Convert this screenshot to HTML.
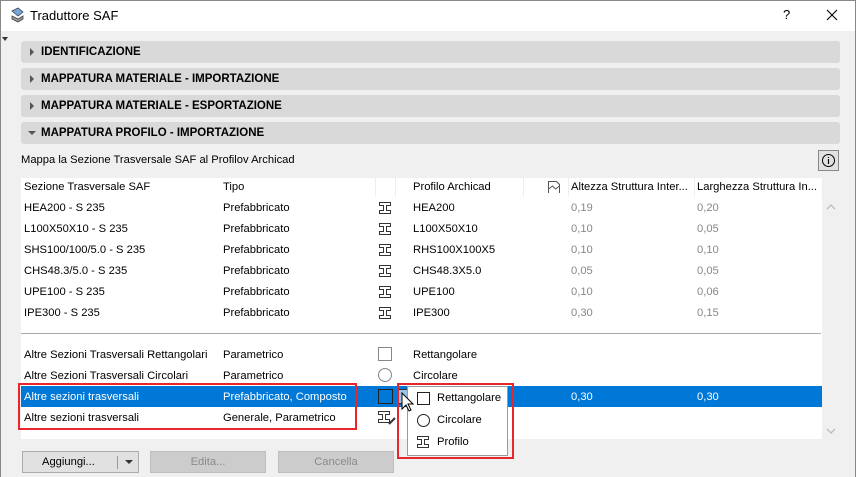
<!DOCTYPE html>
<html><head><meta charset="utf-8"><style>
*{margin:0;padding:0;box-sizing:border-box}
body{width:856px;height:477px;overflow:hidden;background:#f0f0f0;font-family:"Liberation Sans",sans-serif;font-size:11.2px;color:#000;position:relative}
.a{position:absolute;white-space:nowrap}
.title{left:0;top:0;width:856px;height:31px;background:#fff;border:1px solid #888;border-bottom:none}
.sec{position:absolute;left:21px;width:819px;height:22px;background:#d9d9d9;border-radius:3px;font-weight:bold;font-size:11.5px;line-height:22px;padding-left:20px}
.sec:before{content:"";position:absolute;left:9px;top:7px;border-left:4px solid #555;border-top:4px solid transparent;border-bottom:4px solid transparent}
.sec.open:before{left:7px;top:9px;border-top:4px solid #555;border-left:4px solid transparent;border-right:4px solid transparent;border-bottom:none}
.tbl{left:21px;top:178px;width:801px;height:261px;background:#fff}
.v{color:#888}
.btn{position:absolute;top:451px;height:22px;background:#e1e1e1;border:1px solid #adadad;text-align:center;line-height:20px}
.dis{background:#ccc;border-color:#bfbfbf;color:#8a8a8a}
.ib{position:absolute;width:14px;height:14px}
</style></head><body>
<div class="a title"></div>
<svg class="a" style="left:9px;top:7px" width="16" height="16"><path d="M3 4 L9 1 L14 5 L9 9Z" fill="#7aa6d8" stroke="#345" stroke-width=".8"/><path d="M3 9 L9 12 L14 9 L14 12 L9 15 L3 12Z" fill="#999" stroke="#444" stroke-width=".8"/></svg>
<div class="a" style="left:30px;top:8px;font-size:13px">Traduttore SAF</div>
<div class="a" style="left:783px;top:7px;font-size:13px">?</div>
<svg class="a" style="left:826px;top:9px" width="12" height="12"><path d="M1 1L11 11M11 1L1 11" stroke="#000" stroke-width="1.1"/></svg>
<div class="a" style="left:0;top:31px;width:1px;height:446px;background:#888"></div>
<div class="a" style="left:855px;top:31px;width:1px;height:446px;background:#888"></div>
<div class="a" style="left:2px;top:37px;border-top:4px solid #333;border-left:3px solid transparent;border-right:3px solid transparent"></div>
<div class="sec" style="top:41px">IDENTIFICAZIONE</div>
<div class="sec" style="top:68px">MAPPATURA MATERIALE - IMPORTAZIONE</div>
<div class="sec" style="top:95px">MAPPATURA MATERIALE - ESPORTAZIONE</div>
<div class="sec open" style="top:122px">MAPPATURA PROFILO - IMPORTAZIONE</div>
<div class="a" style="left:21px;top:154px">Mappa la Sezione Trasversale SAF al Profilov Archicad</div>
<div class="a" style="left:818px;top:150px;width:21px;height:21px;border:1px solid #888;background:#e1e1e1"><svg width="19" height="19"><circle cx="9.5" cy="9.5" r="6" fill="none" stroke="#000"/><path d="M9.5 8v5M9.5 6v1" stroke="#000" stroke-width="1.2"/></svg></div>
<div class="a tbl"></div>
<div class="a" style="left:24px;top:181px">Sezione Trasversale SAF</div>
<div class="a" style="left:223px;top:181px">Tipo</div>
<div class="a" style="left:413px;top:181px">Profilo Archicad</div>
<div class="a" style="left:571px;top:181px">Altezza Struttura Inter...</div>
<div class="a" style="left:697px;top:181px">Larghezza Struttura In...</div>
<div class="a" style="left:375px;top:178px;width:1px;height:19px;background:#eee"></div>
<div class="a" style="left:395px;top:178px;width:1px;height:19px;background:#eee"></div>
<div class="a" style="left:523px;top:178px;width:1px;height:19px;background:#eee"></div>
<div class="a" style="left:568px;top:178px;width:1px;height:19px;background:#eee"></div>
<div class="a" style="left:694px;top:178px;width:1px;height:19px;background:#eee"></div>
<div class="a" style="left:822px;top:178px;width:1px;height:19px;background:#eee"></div>
<svg class="a" style="left:547px;top:180px" width="14" height="14"><path d="M1.5 13V1.5h8l3 3V13M1.5 9l4-3 3 3 4-3" fill="none" stroke="#555"/></svg>
<div class="a" style="left:24px;top:202px">HEA200 - S 235</div><div class="a" style="left:223px;top:202px">Prefabbricato</div><svg class="ib" style="left:378px;top:201px"><path d="M1.5 1.5h11v3h-4v5h4v3h-11v-3h4v-5h-4z" fill="none" stroke="#333"/></svg><div class="a" style="left:413px;top:202px">HEA200</div><div class="a v" style="left:571px;top:202px">0,19</div><div class="a v" style="left:697px;top:202px">0,20</div>
<div class="a" style="left:24px;top:223px">L100X50X10 - S 235</div><div class="a" style="left:223px;top:223px">Prefabbricato</div><svg class="ib" style="left:378px;top:222px"><path d="M1.5 1.5h11v3h-4v5h4v3h-11v-3h4v-5h-4z" fill="none" stroke="#333"/></svg><div class="a" style="left:413px;top:223px">L100X50X10</div><div class="a v" style="left:571px;top:223px">0,10</div><div class="a v" style="left:697px;top:223px">0,05</div>
<div class="a" style="left:24px;top:244px">SHS100/100/5.0 - S 235</div><div class="a" style="left:223px;top:244px">Prefabbricato</div><svg class="ib" style="left:378px;top:243px"><path d="M1.5 1.5h11v3h-4v5h4v3h-11v-3h4v-5h-4z" fill="none" stroke="#333"/></svg><div class="a" style="left:413px;top:244px">RHS100X100X5</div><div class="a v" style="left:571px;top:244px">0,10</div><div class="a v" style="left:697px;top:244px">0,10</div>
<div class="a" style="left:24px;top:265px">CHS48.3/5.0 - S 235</div><div class="a" style="left:223px;top:265px">Prefabbricato</div><svg class="ib" style="left:378px;top:264px"><path d="M1.5 1.5h11v3h-4v5h4v3h-11v-3h4v-5h-4z" fill="none" stroke="#333"/></svg><div class="a" style="left:413px;top:265px">CHS48.3X5.0</div><div class="a v" style="left:571px;top:265px">0,05</div><div class="a v" style="left:697px;top:265px">0,05</div>
<div class="a" style="left:24px;top:286px">UPE100 - S 235</div><div class="a" style="left:223px;top:286px">Prefabbricato</div><svg class="ib" style="left:378px;top:285px"><path d="M1.5 1.5h11v3h-4v5h4v3h-11v-3h4v-5h-4z" fill="none" stroke="#333"/></svg><div class="a" style="left:413px;top:286px">UPE100</div><div class="a v" style="left:571px;top:286px">0,10</div><div class="a v" style="left:697px;top:286px">0,06</div>
<div class="a" style="left:24px;top:307px">IPE300 - S 235</div><div class="a" style="left:223px;top:307px">Prefabbricato</div><svg class="ib" style="left:378px;top:306px"><path d="M1.5 1.5h11v3h-4v5h4v3h-11v-3h4v-5h-4z" fill="none" stroke="#333"/></svg><div class="a" style="left:413px;top:307px">IPE300</div><div class="a v" style="left:571px;top:307px">0,30</div><div class="a v" style="left:697px;top:307px">0,15</div>
<div class="a" style="left:21px;top:333px;width:800px;height:1px;background:#aaa"></div>
<div class="a" style="left:24px;top:349px">Altre Sezioni Trasversali Rettangolari</div><div class="a" style="left:223px;top:349px">Parametrico</div><div class="a" style="left:378px;top:347px;width:14px;height:14px;border:1px solid #888"></div><div class="a" style="left:413px;top:349px">Rettangolare</div>
<div class="a" style="left:24px;top:370px">Altre Sezioni Trasversali Circolari</div><div class="a" style="left:223px;top:370px">Parametrico</div><div class="a" style="left:378px;top:368px;width:14px;height:14px;border:1px solid #888;border-radius:50%"></div><div class="a" style="left:413px;top:370px">Circolare</div>
<div class="a" style="left:21px;top:386px;width:801px;height:21px;background:#0078d7"></div>
<div class="a" style="left:24px;top:391px;color:#fff">Altre sezioni trasversali</div><div class="a" style="left:223px;top:391px;color:#fff">Prefabbricato, Composto</div><div class="a" style="left:378px;top:389px;width:15px;height:15px;border:1px solid #222"></div><div class="a" style="left:397px;top:389px;width:11px;height:15px;border:1px solid #333;background:#9cc3e8"></div><div class="a" style="left:571px;top:391px;color:#fff">0,30</div><div class="a" style="left:697px;top:391px;color:#fff">0,30</div>
<div class="a" style="left:24px;top:412px">Altre sezioni trasversali</div><div class="a" style="left:223px;top:412px">Generale, Parametrico</div><svg class="a" style="left:377px;top:410px" width="20" height="16"><path d="M1.5 1.5h11v3h-4v5h4v3h-11v-3h4v-5h-4z" fill="none" stroke="#333"/><path d="M12 14l6-6" stroke="#333" stroke-width="2"/></svg>
<div class="a" style="left:407px;top:386px;width:101px;height:70px;background:#fff;border:1px solid #999"></div>
<div class="a" style="left:417px;top:392px;width:13px;height:13px;border:1px solid #222"></div><div class="a" style="left:437px;top:392px">Rettangolare</div>
<div class="a" style="left:417px;top:414px;width:13px;height:13px;border:1px solid #222;border-radius:50%"></div><div class="a" style="left:437px;top:414px">Circolare</div>
<svg class="ib" style="left:416px;top:435px"><path d="M1.5 1.5h11v3h-4v5h4v3h-11v-3h4v-5h-4z" fill="none" stroke="#333"/></svg><div class="a" style="left:437px;top:436px">Profilo</div>
<svg class="a" style="left:401px;top:392px" width="14" height="22"><path d="M1 1v16l4-4 3 6 2-1-3-6h5z" fill="#fff" stroke="#000"/></svg>
<div class="a" style="left:18px;top:383px;width:339px;height:47px;border:2px solid #e8262b"></div>
<div class="a" style="left:397px;top:383px;width:117px;height:76px;border:2px solid #e8262b"></div>
<svg class="a" style="left:826px;top:203px" width="10" height="8"><path d="M1 6l4-4 4 4" fill="none" stroke="#bbb" stroke-width="1.3"/></svg>
<svg class="a" style="left:826px;top:427px" width="10" height="8"><path d="M1 2l4 4 4-4" fill="none" stroke="#bbb" stroke-width="1.3"/></svg>
<div class="btn" style="left:22px;width:117px;text-align:left;padding-left:19px">Aggiungi...<span style="position:absolute;left:94px;top:4px;width:1px;height:13px;background:#999"></span><span style="position:absolute;left:102px;top:8px;border-top:4px solid #333;border-left:4px solid transparent;border-right:4px solid transparent"></span></div>
<div class="btn dis" style="left:150px;width:116px">Edita...</div>
<div class="btn dis" style="left:278px;width:116px">Cancella</div>
</body></html>
